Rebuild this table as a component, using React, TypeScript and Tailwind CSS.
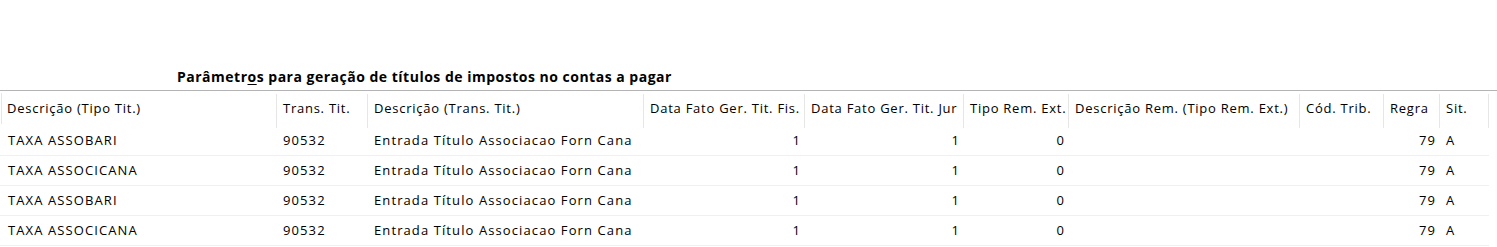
const columns = [
  { label: 'Descrição (Tipo Tit.)', width: 'w-[277px]', align: 'left' },
  { label: 'Trans. Tit.', width: 'w-[91px]', align: 'left' },
  { label: 'Descrição (Trans. Tit.)', width: 'w-[276px]', align: 'left' },
  { label: 'Data Fato Ger. Tit. Fis.', width: 'w-[161px]', align: 'right' },
  { label: 'Data Fato Ger. Tit. Jur', width: 'w-[159px]', align: 'right' },
  { label: 'Tipo Rem. Ext.', width: 'w-[105px]', align: 'right' },
  { label: 'Descrição Rem. (Tipo Rem. Ext.)', width: 'w-[231px]', align: 'left' },
  { label: 'Cód. Trib.', width: 'w-[84px]', align: 'left' },
  { label: 'Regra', width: 'w-[56px]', align: 'right' },
  { label: 'Sit.', width: 'w-[49px]', align: 'left' }
]

const rows = [
  ['TAXA ASSOBARI', '90532', 'Entrada Título Associacao Forn Cana', '1', '1', '0', '', '', '79', 'A'],
  ['TAXA ASSOCICANA', '90532', 'Entrada Título Associacao Forn Cana', '1', '1', '0', '', '', '79', 'A'],
  ['TAXA ASSOBARI', '90532', 'Entrada Título Associacao Forn Cana', '1', '1', '0', '', '', '79', 'A'],
  ['TAXA ASSOCICANA', '90532', 'Entrada Título Associacao Forn Cana', '1', '1', '0', '', '', '79', 'A']
]

export default function App() {
  return (
    <div
      className="w-[1497px] h-[247px] bg-white text-black overflow-hidden"
      style={{ fontFamily: '"Open Sans", "Noto Sans", sans-serif' }}
    >
      {/* Title */}
      <div className="h-[90px] flex items-end pl-[177px] pb-[4px]">
        <h1 className="text-[14px] font-bold leading-[18px] tracking-[0.5px]">
          Parâmetr<span className="underline underline-offset-2">o</span>s para geração de títulos de impostos no contas a pagar
        </h1>
      </div>

      {/* Grid */}
      <div className="border-t border-[#b4b4b4] text-[13px] font-medium">
        {/* Header */}
        <div className="flex h-[35px] tracking-[0.75px]">
          {columns.map((col, i) => (
            <div key={i} className={`${col.width} flex shrink-0`}>
              {i === 0 && <div className="w-px ml-px my-[2px] bg-[#e6e6e6]" />}
              <div className={`flex-1 min-w-0 overflow-hidden whitespace-nowrap flex items-center pt-[1px] ${i === 0 ? 'pl-[5px]' : 'pl-[6px]'}`}>
                {col.label}
              </div>
              <div className="w-px mt-[3px] -mb-[2px] bg-[#e6e6e6]" />
            </div>
          ))}
        </div>

        {/* Rows */}
        {rows.map((row, r) => (
          <div key={r} className="flex w-[1489px] h-[30px] border-b border-[#f0f0f0] tracking-[1.1px]">
            {row.map((cell, c) => (
              <div
                key={c}
                className={`${columns[c].width} shrink-0 flex items-center whitespace-nowrap overflow-hidden ${
                  columns[c].align === 'right' ? 'justify-end pr-[4px]' : c === 0 ? 'pl-[8px]' : 'pl-[6px]'
                }`}
              >
                {cell}
              </div>
            ))}
          </div>
        ))}
      </div>
    </div>
  )
}
